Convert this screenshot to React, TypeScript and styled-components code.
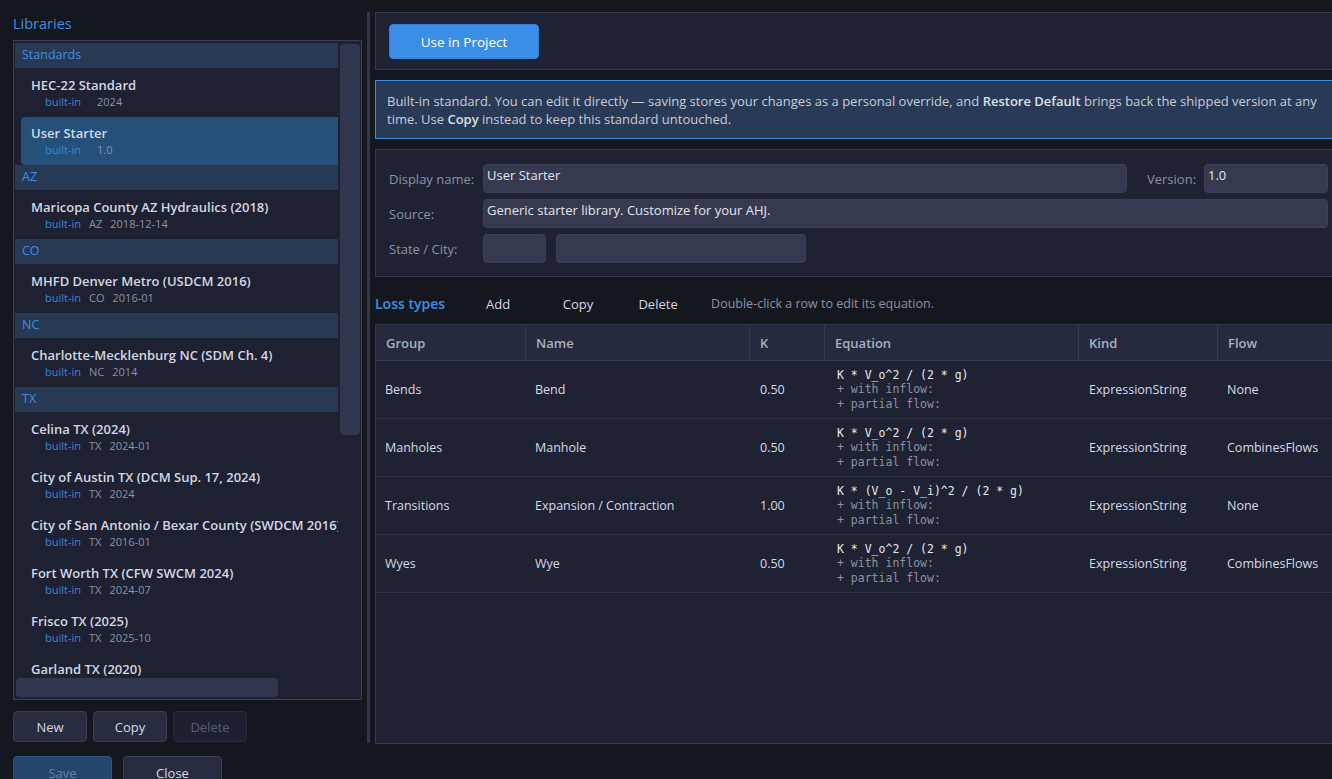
import React from 'react';
import styled, { createGlobalStyle } from 'styled-components';

const GlobalStyle = createGlobalStyle`
  html, body {
    margin: 0;
    padding: 0;
    background: #15171f;
    font-family: "Open Sans", "Noto Sans", sans-serif;
    font-size: 13px;
    color: #d6d9e2;
  }
  * { box-sizing: border-box; }
`;

const Root = styled.div`
  display: flex;
  height: 779px;
  width: 1332px;
  overflow: hidden;
`;

const Sidebar = styled.div`
  flex: 0 0 362px;
  padding: 12px 0 0 13px;
  display: flex;
  flex-direction: column;
  & > * { flex-shrink: 0; }
`;

const SideTitle = styled.div`
  height: 28px;
  line-height: 23px;
  font-size: 14.5px;
  color: #3d8fe3;
`;

const ListBox = styled.div`
  position: relative;
  height: 660px;
  border: 1px solid #393e55;
  background: #1e2131;
  padding: 2px 1px;
  display: flex;
  overflow: hidden;
`;

const ListContent = styled.div`
  width: 323px;
  flex: 0 0 323px;
  overflow: hidden;
`;

const VThumb = styled.div`
  flex: 0 0 20px;
  margin: 1px 0 0 2px;
  height: 391px;
  border-radius: 4px;
  background: #323750;
`;

const HThumb = styled.div`
  position: absolute;
  left: 2px;
  bottom: 2px;
  width: 262px;
  height: 19px;
  border-radius: 4px;
  background: #323750;
`;

const GroupHeader = styled.div`
  height: 26px;
  line-height: 24px;
  padding-left: 7px;
  background: #283953;
  border-bottom: 1px solid #1b2030;
  color: #3d8fe3;
  font-size: 12.5px;
  font-weight: 500;
`;

const Item = styled.div<{ $selected?: boolean }>`
  height: 48px;
  margin-left: 6px;
  padding: 7px 0 0 10px;
  border-radius: 4px 0 0 4px;
  background: ${(p) => (p.$selected ? '#245079' : 'transparent')};
  white-space: nowrap;
  overflow: hidden;
`;

const ItemTitle = styled.div`
  line-height: 18px;
  font-weight: 600;
  color: #d3d7e2;
`;

const ItemMeta = styled.div`
  display: flex;
  gap: 8px;
  padding-left: 14px;
  line-height: 16px;
  font-size: 11px;
  color: #8c92a3;
`;

const Tag = styled.span`
  color: #3a86d8;
`;

const ButtonRow = styled.div<{ $top: number; $gap: number }>`
  display: flex;
  gap: ${(p) => p.$gap}px;
  margin-top: ${(p) => p.$top}px;
`;

const Btn = styled.button<{ $w?: number; $h?: number; $variant?: 'disabled' | 'primaryDim' }>`
  width: ${(p) => p.$w ?? 74}px;
  height: ${(p) => p.$h ?? 31}px;
  flex: 0 0 auto;
  border-radius: 4px;
  font-family: inherit;
  font-size: 13px;
  border: 1px solid
    ${(p) => (p.$variant === 'disabled' ? '#272a3a' : p.$variant === 'primaryDim' ? '#2b5482' : '#393e55')};
  background: ${(p) => (p.$variant === 'disabled' ? '#1d2030' : p.$variant === 'primaryDim' ? '#23466d' : '#282c40')};
  color: ${(p) => (p.$variant === 'disabled' ? '#585e70' : p.$variant === 'primaryDim' ? '#6f8095' : '#d6d9e2')};
  padding: 0;
`;

const Splitter = styled.div`
  flex: 0 0 3px;
  margin: 12px 5px 0 5px;
  height: 731px;
  background: #33374b;
`;

const Main = styled.div`
  flex: 0 0 962px;
  padding-top: 12px;
  display: flex;
  flex-direction: column;
  & > * { flex-shrink: 0; }
`;

const Panel = styled.div`
  background: #1f2233;
  border: 1px solid #33384c;
`;

const TopBar = styled(Panel)`
  height: 58px;
  padding: 11px 13px;
`;

const PrimaryButton = styled.button`
  width: 150px;
  height: 35px;
  border-radius: 4px;
  border: 1px solid #2f7fd6;
  background: #3a8ee6;
  color: #ffffff;
  font-family: inherit;
  font-size: 13.5px;
  padding-top: 2px;
`;

const InfoBox = styled.div`
  margin-top: 10px;
  height: 59px;
  padding: 11px 11px 0 11px;
  background: #283a56;
  border: 1px solid #3a8ee6;
  line-height: 18px;
  color: #c9cdd8;
  white-space: nowrap;
  overflow: hidden;
  b { font-weight: 600; color: #dde0e8; }
`;

const FormPanel = styled(Panel)`
  margin-top: 10px;
  height: 128px;
  padding: 14px 8px 0 13px;
  display: flex;
  flex-direction: column;
  gap: 6px;
`;

const FormRow = styled.div`
  display: flex;
  align-items: center;
  height: 29px;
`;

const Label = styled.div<{ $w?: number; $ml?: number }>`
  width: ${(p) => p.$w ?? 94}px;
  margin-left: ${(p) => p.$ml ?? 0}px;
  flex: 0 0 auto;
  color: #8c92a3;
`;

const Field = styled.div<{ $w?: number; $grow?: boolean; $ml?: number }>`
  height: 29px;
  ${(p) => (p.$grow ? 'flex: 1 1 auto;' : `flex: 0 0 ${p.$w}px;`)}
  margin-left: ${(p) => p.$ml ?? 0}px;
  background: #353a50;
  border: 1px solid #3b4057;
  border-radius: 4px;
  padding: 1px 4px 0 3px;
  line-height: 18px;
  color: #e2e5ec;
`;

const Toolbar = styled.div`
  height: 47px;
  padding-top: 6px;
  display: flex;
  align-items: center;
`;

const SectionTitle = styled.div`
  font-size: 14px;
  font-weight: 600;
  color: #3d8fe3;
  margin-right: 16px;
`;

const FlatButton = styled.button`
  width: 74px;
  margin-right: 6px;
  background: transparent;
  border: none;
  color: #d6d9e2;
  font-family: inherit;
  font-size: 13px;
  padding: 0;
`;

const Hint = styled.div`
  margin-left: 10px;
  color: #8c92a3;
  font-size: 12.5px;
`;

const Table = styled.div`
  height: 420px;
  border: 1px solid #33384c;
  background: #1f2233;
`;

const cols = '150px 224px 75px 254px 139px 1fr';

const HeadRow = styled.div`
  display: grid;
  grid-template-columns: ${cols};
  height: 36px;
  background: #262a3e;
  border-bottom: 1px solid #353a50;
`;

const HeadCell = styled.div`
  padding: 2px 0 0 10px;
  line-height: 33px;
  font-weight: 600;
  color: #a9afc0;
  border-right: 1px solid #353a50;
  &:last-child { border-right: none; }
`;

const Row = styled.div`
  display: grid;
  grid-template-columns: ${cols};
  height: 58px;
  border-bottom: 1px solid #2e3246;
  align-items: center;
`;

const Cell = styled.div<{ $pl?: number }>`
  padding-left: ${(p) => p.$pl ?? 9}px;
  font-size: 12.5px;
  color: #d8dbe4;
  white-space: nowrap;
`;

const Equation = styled.div`
  padding-left: 12px;
  font-family: "DejaVu Sans Mono", "Liberation Mono", monospace;
  font-size: 11.5px;
  line-height: 14.5px;
  white-space: pre;
  color: #8c92a3;
  div:first-child { color: #e6e9ef; }
`;

type Lib = { title: string; state: string; date: string; selected?: boolean };

const groups: { name: string; items: Lib[] }[] = [
  {
    name: 'Standards',
    items: [
      { title: 'HEC-22 Standard', state: '', date: '2024' },
      { title: 'User Starter', state: '', date: '1.0', selected: true },
    ],
  },
  { name: 'AZ', items: [{ title: 'Maricopa County AZ Hydraulics (2018)', state: 'AZ', date: '2018-12-14' }] },
  { name: 'CO', items: [{ title: 'MHFD Denver Metro (USDCM 2016)', state: 'CO', date: '2016-01' }] },
  { name: 'NC', items: [{ title: 'Charlotte-Mecklenburg NC (SDM Ch. 4)', state: 'NC', date: '2014' }] },
  {
    name: 'TX',
    items: [
      { title: 'Celina TX (2024)', state: 'TX', date: '2024-01' },
      { title: 'City of Austin TX (DCM Sup. 17, 2024)', state: 'TX', date: '2024' },
      { title: 'City of San Antonio / Bexar County (SWDCM 2016)', state: 'TX', date: '2016-01' },
      { title: 'Fort Worth TX (CFW SWCM 2024)', state: 'TX', date: '2024-07' },
      { title: 'Frisco TX (2025)', state: 'TX', date: '2025-10' },
      { title: 'Garland TX (2020)', state: 'TX', date: '2020' },
    ],
  },
];

const lossTypes = [
  { group: 'Bends', name: 'Bend', k: '0.50', eq: 'K * V_o^2 / (2 * g)', kind: 'ExpressionString', flow: 'None' },
  { group: 'Manholes', name: 'Manhole', k: '0.50', eq: 'K * V_o^2 / (2 * g)', kind: 'ExpressionString', flow: 'CombinesFlows' },
  { group: 'Transitions', name: 'Expansion / Contraction', k: '1.00', eq: 'K * (V_o - V_i)^2 / (2 * g)', kind: 'ExpressionString', flow: 'None' },
  { group: 'Wyes', name: 'Wye', k: '0.50', eq: 'K * V_o^2 / (2 * g)', kind: 'ExpressionString', flow: 'CombinesFlows' },
];

export default function App() {
  return (
    <>
      <GlobalStyle />
      <Root>
        <Sidebar>
          <SideTitle>Libraries</SideTitle>
          <ListBox>
            <ListContent>
              {groups.map((g) => (
                <React.Fragment key={g.name}>
                  <GroupHeader>{g.name}</GroupHeader>
                  {g.items.map((it) => (
                    <Item key={it.title} $selected={it.selected}>
                      <ItemTitle>{it.title}</ItemTitle>
                      <ItemMeta>
                        <Tag>built-in</Tag>
                        <span>{it.state}</span>
                        <span>{it.date}</span>
                      </ItemMeta>
                    </Item>
                  ))}
                </React.Fragment>
              ))}
            </ListContent>
            <VThumb />
            <HThumb />
          </ListBox>
          <ButtonRow $top={11} $gap={6}>
            <Btn>New</Btn>
            <Btn>Copy</Btn>
            <Btn $variant="disabled">Delete</Btn>
          </ButtonRow>
          <ButtonRow $top={14} $gap={11}>
            <Btn $w={99} $h={34} $variant="primaryDim">Save</Btn>
            <Btn $w={99} $h={34}>Close</Btn>
          </ButtonRow>
        </Sidebar>
        <Splitter />
        <Main>
          <TopBar>
            <PrimaryButton>Use in Project</PrimaryButton>
          </TopBar>
          <InfoBox>
            Built-in standard. You can edit it directly — saving stores your changes as a personal override, and{' '}
            <b>Restore Default</b> brings back the shipped version at any
            <br />
            time. Use <b>Copy</b> instead to keep this standard untouched.
          </InfoBox>
          <FormPanel>
            <FormRow>
              <Label>Display name:</Label>
              <Field $grow>User Starter</Field>
              <Label $w={57} $ml={20}>Version:</Label>
              <Field $w={124}>1.0</Field>
            </FormRow>
            <FormRow>
              <Label>Source:</Label>
              <Field $grow>Generic starter library. Customize for your AHJ.</Field>
            </FormRow>
            <FormRow>
              <Label>State / City:</Label>
              <Field $w={63} />
              <Field $w={250} $ml={10} />
            </FormRow>
          </FormPanel>
          <Toolbar>
            <SectionTitle>Loss types</SectionTitle>
            <FlatButton>Add</FlatButton>
            <FlatButton>Copy</FlatButton>
            <FlatButton>Delete</FlatButton>
            <Hint>Double-click a row to edit its equation.</Hint>
          </Toolbar>
          <Table>
            <HeadRow>
              {['Group', 'Name', 'K', 'Equation', 'Kind', 'Flow'].map((h) => (
                <HeadCell key={h}>{h}</HeadCell>
              ))}
            </HeadRow>
            {lossTypes.map((r) => (
              <Row key={r.group}>
                <Cell>{r.group}</Cell>
                <Cell>{r.name}</Cell>
                <Cell $pl={10}>{r.k}</Cell>
                <Equation>
                  <div>{r.eq}</div>
                  <div>+ with inflow:</div>
                  <div>+ partial flow:</div>
                </Equation>
                <Cell $pl={10}>{r.kind}</Cell>
                <Cell>{r.flow}</Cell>
              </Row>
            ))}
          </Table>
        </Main>
      </Root>
    </>
  );
}
